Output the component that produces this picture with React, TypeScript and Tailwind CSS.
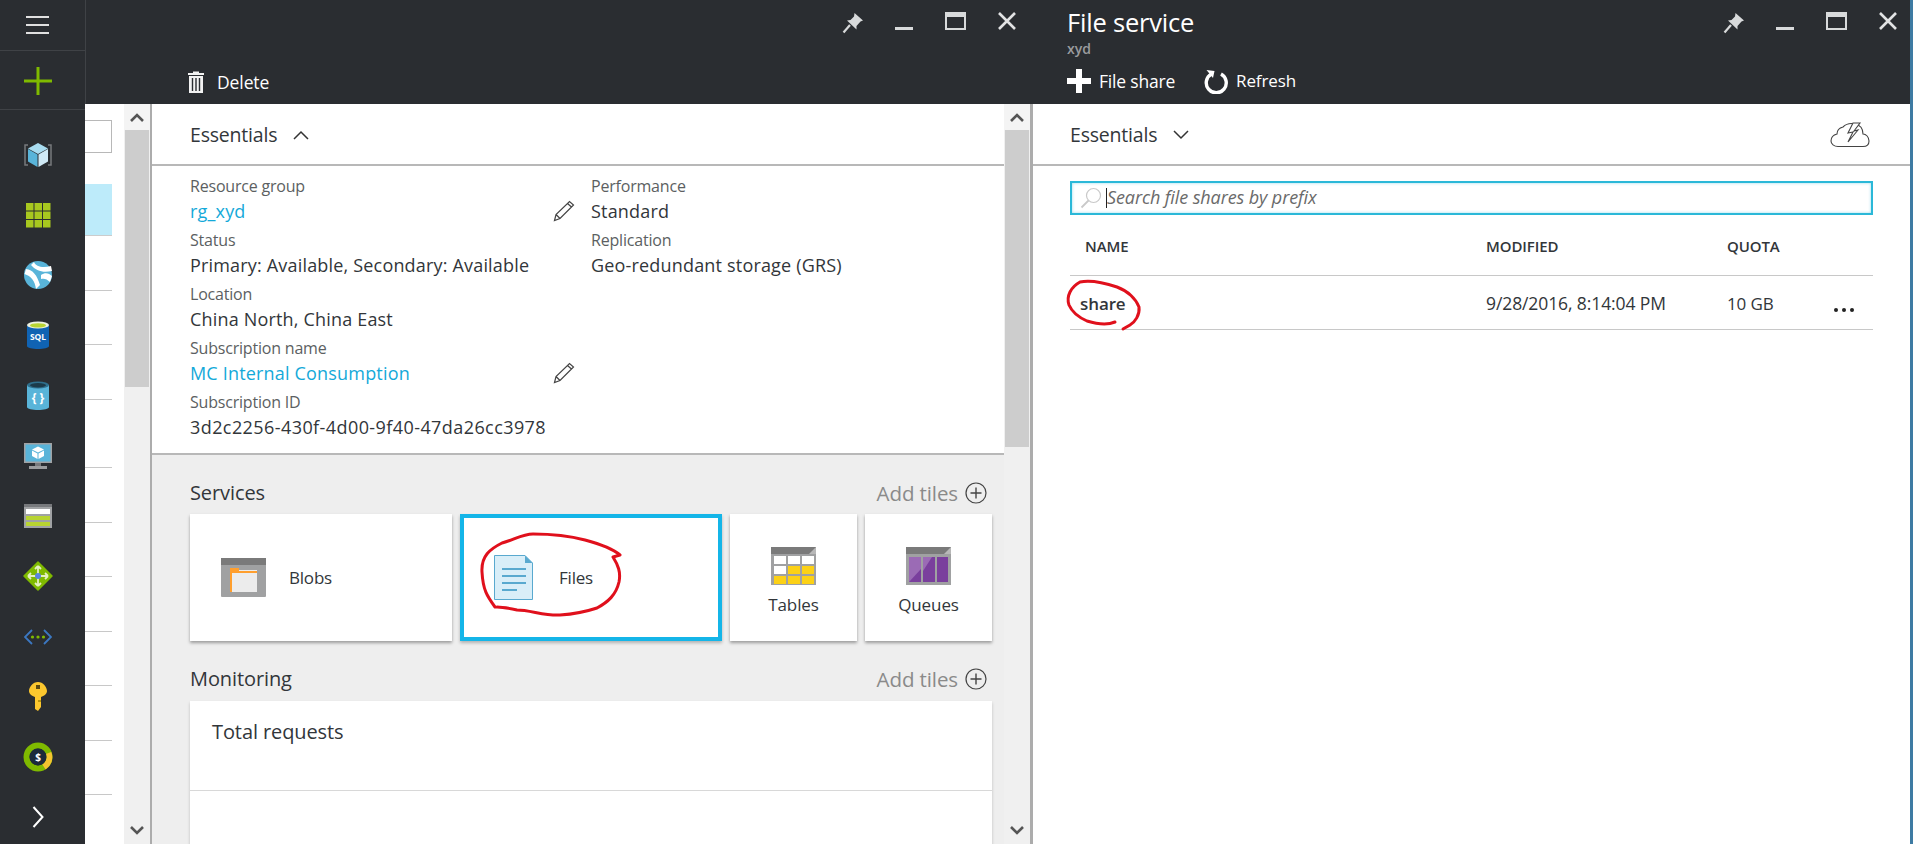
import React from "react";

const RowHeights = ["h-[55px]", "h-[54px]", "h-[55px]", "h-[68px]", "h-[55px]", "h-[54px]", "h-[55px]", "h-[54px]", "h-[55px]", "h-[54px]"];

function Pin() {
  return (
    <svg width="22" height="22" viewBox="0 0 22 22">
      <path d="M12.5 1 L21 8.5 L18.5 9.5 L14.5 14 L14.5 17.5 L5 8.5 L8.5 8 L12 4.5 Z" fill="#d8dadb" />
      <path d="M8 13 L1.5 20.5" stroke="#d8dadb" strokeWidth="2.2" />
    </svg>
  );
}

function WindowControls() {
  return (
    <div className="flex items-start">
      <div className="w-[22px] h-[22px]"><Pin /></div>
      <div className="ml-[31px] mt-[15px] w-[18px] h-[3px] bg-[#d8dadb]" />
      <div className="ml-[32px] w-[21px] h-[18px] border-2 border-t-[5px] border-[#d8dadb]" />
      <svg className="ml-[32px]" width="18" height="18" viewBox="0 0 18 18">
        <path d="M1 1 L17 17 M17 1 L1 17" stroke="#e2e3e4" strokeWidth="2.6" />
      </svg>
    </div>
  );
}

function Pencil() {
  return (
    <svg width="22" height="22" viewBox="0 0 22 22" fill="none" stroke="#444" strokeWidth="1.2">
      <path d="M1.5 20.5 L3 14.5 L16.5 1.5 L20.5 5 L7 18.5 Z M3 14.5 L7 18.5 M14.5 3.5 L18.5 7" />
    </svg>
  );
}

function PlusCircle() {
  return (
    <svg width="22" height="22" viewBox="0 0 22 22" fill="none" stroke="#444" strokeWidth="1.2">
      <circle cx="11" cy="11" r="10" />
      <path d="M11 5.5 V16.5 M5.5 11 H16.5" strokeWidth="1.4" />
    </svg>
  );
}

function Chevron({ up, className }: { up?: boolean; className?: string }) {
  return (
    <svg className={className} width="16" height="10" viewBox="0 0 16 10" fill="none" stroke="#333" strokeWidth="1.5">
      <path d={up ? "M1 9 L8 2 L15 9" : "M1 1 L8 8 L15 1"} />
    </svg>
  );
}

function ScrollArrow({ up }: { up?: boolean }) {
  return (
    <svg width="14" height="10" viewBox="0 0 14 10" fill="none" stroke="#555" strokeWidth="2.6">
      <path d={up ? "M1 9 L7 3 L13 9" : "M1 1 L7 7 L13 1"} />
    </svg>
  );
}

function ScrollBar({ thumb, w }: { thumb: string; w: string }) {
  return (
    <div className={`${w} shrink-0 bg-[#f0f0f0] flex flex-col items-center h-full`}>
      <div className="h-[26px] w-full bg-[#f4f4f4] flex items-center justify-center"><ScrollArrow up /></div>
      <div className={`${thumb} w-[24px] bg-[#cdcdcd]`} />
      <div className="flex-1" />
      <div className="h-[26px] flex items-center justify-center"><ScrollArrow /></div>
    </div>
  );
}

function Field({ label, value, link, edit, wide }: { label: string; value: string; link?: boolean; edit?: boolean; wide?: boolean }) {
  return (
    <>
      <div className="h-[27px] leading-[27px] text-[16px] text-[#5c5f62] tracking-[-0.2px]">{label}</div>
      <div className="relative h-[27px] leading-[23px] flex justify-between items-start">
        <span className={`text-[18px] ${wide ? "tracking-[0.42px]" : "tracking-[0.18px]"} ${link ? "text-[#14a9d9]" : "text-[#32363a]"}`}>{value}</span>
        {edit ? <Pencil /> : null}
      </div>
    </>
  );
}

function SectionHead({ title, className }: { title: string; className: string }) {
  return (
    <div className={`h-[28px] flex items-center justify-between pr-[5px] ${className}`}>
      <span className="text-[20px] text-[#32363a] tracking-[-0.1px]">{title}</span>
      <span className="flex items-center gap-[7px]">
        <span className="text-[20.5px] text-[#8a8a8a] tracking-[-0.1px]">Add tiles</span>
        <PlusCircle />
      </span>
    </div>
  );
}

const sideIcons: React.ReactNode[] = [
  <svg key="a" width="30" height="30" viewBox="0 0 30 30">
    <path d="M5 5 H2 V25 H5 M25 5 H28 V25 H25" fill="none" stroke="#77797c" strokeWidth="1.5" />
    <path d="M15 3 L25 8.5 L15 14 L5 8.5 Z" fill="#a8dcf0" />
    <path d="M5 9 L14.5 14.5 V27 L5 21.5 Z" fill="#59b4d9" />
    <path d="M25 9 L15.5 14.5 V27 L25 21.5 Z" fill="#cfe9f5" />
  </svg>,
  <svg key="b" width="26" height="26" viewBox="0 0 26 26" fill="#a8c81f">
    {[1, 9.5, 18].map((x) => [1, 9.5, 18].map((y) => <rect key={`${x}-${y}`} x={x} y={y} width="7.5" height="7.5" />))}
  </svg>,
  <svg key="c" width="30" height="30" viewBox="0 0 30 30">
    <circle cx="15" cy="15" r="14" fill="#59b4d9" />
    <path d="M3 9 C10 10 14 15 17 25 L13 29 C12 21 8 16 1.5 14 Z M11 2 C13 7 20 8 28 6 L29 11 C20 13 13 11 8 5 Z M18 15 C22 12 26 13 29 16 L27 22 C24 19 21 18 18 19 Z" fill="#ffffff" />
  </svg>,
  <svg key="d" width="24" height="29" viewBox="0 0 24 29">
    <path d="M1 4 V25 C1 29 23 29 23 25 V4 Z" fill="#1063b3" />
    <ellipse cx="12" cy="4" rx="11" ry="3.6" fill="#eef2e0" />
    <ellipse cx="12" cy="4.4" rx="8" ry="2.2" fill="#b8d432" />
    <text x="12" y="19" textAnchor="middle" fontSize="8.5" fontWeight="700" fill="#ffffff" fontFamily="Open Sans, sans-serif">SQL</text>
  </svg>,
  <svg key="e" width="24" height="30" viewBox="0 0 24 30">
    <path d="M1 4 V26 C1 30 23 30 23 26 V4 Z" fill="#59b4d9" />
    <ellipse cx="12" cy="4" rx="11" ry="3.6" fill="#2f6f8c" />
    <ellipse cx="12" cy="4.3" rx="8" ry="2.2" fill="#1c3b4a" />
    <text x="12" y="21" textAnchor="middle" fontSize="12" fontWeight="700" fill="#ffffff" fontFamily="Open Sans, sans-serif">{"{ }"}</text>
  </svg>,
  <svg key="f" width="28" height="27" viewBox="0 0 28 27">
    <rect x="0" y="0" width="28" height="20" fill="#a0a2a4" />
    <rect x="1.5" y="1.5" width="25" height="17" fill="#59b4d9" />
    <path d="M14 3.5 L20 6.5 L14 9.5 L8 6.5 Z M8 7.5 L13.5 10.5 V16 L8 13 Z M20 7.5 L14.5 10.5 V16 L20 13 Z" fill="#ffffff" />
    <rect x="11" y="20" width="6" height="3" fill="#77797c" />
    <rect x="5" y="23" width="18" height="3" fill="#9a9c9e" />
  </svg>,
  <svg key="g" width="28" height="24" viewBox="0 0 28 24">
    <rect width="28" height="24" fill="#a0a2a4" />
    <rect y="0" width="28" height="3" fill="#77797c" />
    <rect x="2" y="5" width="24" height="5" fill="#ffffff" />
    <rect x="2" y="12" width="24" height="4" fill="#b8d432" />
    <rect x="2" y="18" width="24" height="4" fill="#b8d432" />
  </svg>,
  <svg key="h" width="30" height="30" viewBox="0 0 30 30">
    <path d="M15 1 L29 15 L15 29 L1 15 Z" fill="#7fba00" stroke="#7fba00" strokeWidth="1.5" strokeLinejoin="round" />
    <path d="M15 5 V25 M5 15 H25 M15 5 L12 8 M15 5 L18 8 M15 25 L12 22 M15 25 L18 22 M5 15 L8 12 M5 15 L8 18 M25 15 L22 12 M25 15 L22 18" stroke="#e4f0c0" strokeWidth="1.8" fill="none" />
    <circle cx="15" cy="15" r="3" fill="#5a84e0" />
  </svg>,
  <svg key="i" width="28" height="16" viewBox="0 0 28 16" fill="none">
    <path d="M8 1 L1 8 L8 15 M20 1 L27 8 L20 15" stroke="#3b78c2" strokeWidth="1.8" />
    <circle cx="8.5" cy="8" r="1.6" fill="#7fba00" />
    <circle cx="14" cy="8" r="1.6" fill="#7fba00" />
    <circle cx="19.5" cy="8" r="1.6" fill="#7fba00" />
  </svg>,
  <svg key="j" width="18" height="30" viewBox="0 0 18 30">
    <path d="M9 0 C14 0 18 5 18 9 C18 12 15 14 12 15 V25 L9 29 L6 27 V15 C3 14 0 12 0 9 C0 5 4 0 9 0 Z" fill="#fcc72e" />
    <rect x="7" y="3" width="4" height="4" fill="#5c4a10" />
    <rect x="9" y="18" width="3" height="2" fill="#b89410" />
  </svg>,
  <svg key="k" width="30" height="30" viewBox="0 0 30 30">
    <circle cx="15" cy="15" r="11.5" fill="none" stroke="#7fba00" strokeWidth="6" />
    <path d="M25.5 11 A11.5 11.5 0 0 1 21 25" fill="none" stroke="#f4c430" strokeWidth="6" />
    <circle cx="15" cy="15" r="8.5" fill="#1c2a3a" />
    <text x="15" y="19" textAnchor="middle" fontSize="10" fontWeight="700" fill="#ffffff" fontFamily="Open Sans, sans-serif">$</text>
  </svg>,
  <svg key="l" width="12" height="22" viewBox="0 0 12 22" fill="none">
    <path d="M1.5 1 L10.5 11 L1.5 21" stroke="#ffffff" strokeWidth="2" />
  </svg>,
];

export default function App() {
  return (
    <div className="relative w-[1913px] h-[844px] overflow-hidden flex bg-white font-['Open_Sans',sans-serif]">
      {/* Left nav */}
      <aside className="w-[85px] shrink-0 h-full bg-[#2a2d31] flex flex-col">
        <div className="h-[51px] shrink-0 border-b border-[#3f4246] pr-[10px] flex items-center justify-center">
          <div className="flex flex-col gap-[6px] w-[23px]">
            <div className="h-[2px] bg-[#e0e0e0]" />
            <div className="h-[2px] bg-[#e0e0e0]" />
            <div className="h-[2px] bg-[#e0e0e0]" />
          </div>
        </div>
        <div className="h-[59px] shrink-0 border-b border-[#3f4246] pr-[10px] pt-[1px] flex items-center justify-center">
          <svg width="30" height="30" viewBox="0 0 30 30"><path d="M15 1 V29 M1 15 H29" stroke="#7fba00" strokeWidth="3" /></svg>
        </div>
        <div className="mt-[15px] flex flex-col pr-[10px]">
          {sideIcons.map((ic, i) => (
            <div key={i} className="h-[60.2px] flex items-center justify-center">{ic}</div>
          ))}
        </div>
      </aside>

      {/* Browse list pane */}
      <div className="w-[65px] shrink-0 h-full flex flex-col">
        <div className="h-[104px] shrink-0 bg-[#2a2d31] border-l border-[#3f4246]" />
        <div className="flex-1 flex min-h-0">
          <div className="w-[39px] shrink-0 pr-[12px] pt-[16px]">
            <div className="h-[33px] border border-l-0 border-[#b8b8b8]" />
            <div className="mt-[31px] h-[52px] bg-[#bdebfa] border-b border-[#ccc]" />
            {RowHeights.map((h, r) => (
              <div key={r} className={`${h} border-b border-[#c8c8c8]`} />
            ))}
          </div>
          <ScrollBar w="w-[26px]" thumb="h-[257px]" />
        </div>
      </div>

      {/* Storage blade */}
      <section className="w-[883px] shrink-0 h-full flex flex-col border-l-[2px] border-r-[3px] border-[#acacac]">
        <header className="h-[104px] shrink-0 bg-[#2a2d31] pl-[38px] pr-[11px] pt-[12px] flex justify-between -ml-[2px] -mr-[3px]">
          <div className="pt-[56px] flex items-center h-[84px] gap-[13px]">
            <svg width="16" height="22" viewBox="0 0 16 22">
              <path d="M5 2 V0.5 H11 V2 H16 V4 H0 V2 Z M1 5 H15 V22 H1 Z" fill="#f2f2f2" />
              <path d="M4.5 7 V20 M8 7 V20 M11.5 7 V20" stroke="#2a2d31" strokeWidth="1.4" />
            </svg>
            <span className="text-[17.5px] text-white tracking-[-0.1px]">Delete</span>
          </div>
          <div className="mr-[6px]"><WindowControls /></div>
        </header>
        <div className="flex-1 flex min-h-0">
          <div className="flex-1 min-w-0 flex flex-col">
            <div className="h-[62px] shrink-0 border-b-2 border-[#b8b8b8] pl-[38px] pt-[1px] flex items-center gap-[16px]">
              <span className="text-[19.5px] text-[#32363a] tracking-[-0.2px]">Essentials</span>
              <Chevron up />
            </div>
            <div className="h-[289px] shrink-0 border-b-2 border-[#b8b8b8] pl-[38px] pt-[7px] flex">
              <div className="w-[385px]">
                <Field label="Resource group" value="rg_xyd" link edit />
                <Field label="Status" value="Primary: Available, Secondary: Available" />
                <Field label="Location" value="China North, China East" />
                <Field label="Subscription name" value="MC Internal Consumption" link edit />
                <Field label="Subscription ID" value="3d2c2256-430f-4d00-9f40-47da26cc3978" wide />
              </div>
              <div className="ml-[16px]">
                <Field label="Performance" value="Standard" />
                <Field label="Replication" value="Geo-redundant storage (GRS)" />
              </div>
            </div>
            <div className="flex-1 bg-[#eeeeee] pl-[38px] pr-[12px] overflow-hidden">
              <SectionHead title="Services" className="mt-[24px] mb-[7px]" />
              <div className="flex gap-[8px] h-[127px]">
                <div className="w-[262px] bg-white shadow-[0_2px_3px_rgba(0,0,0,0.35)] flex items-center pl-[31px] gap-[23px]">
                  <svg width="45" height="39" viewBox="0 0 45 39">
                    <rect width="45" height="39" rx="1" fill="#a0a1a2" />
                    <rect width="45" height="7" fill="#7a7a7a" />
                    <rect x="9" y="12" width="27" height="22" fill="#ececec" />
                    <path d="M9 34 V10 H18 V13 H36 V15 H11 V34 Z" fill="#ff9f2e" />
                  </svg>
                  <span className="text-[17px] text-[#32363a] tracking-[-0.2px]">Blobs</span>
                </div>
                <div className="w-[262px] bg-white border-4 border-[#14b5e8] shadow-[0_2px_3px_rgba(0,0,0,0.25)] flex items-center pl-[30px] gap-[26px]">
                  <svg width="39" height="45" viewBox="0 0 39 45">
                    <path d="M0.5 0.5 H31 L38.5 8 V44.5 H0.5 Z" fill="#d9eef8" stroke="#59a9cf" />
                    <path d="M31 0.5 V8 H38.5 Z" fill="#59a9cf" />
                    <path d="M8 14 H32 M8 21 H32 M8 28 H32 M8 35 H23" stroke="#59a9cf" strokeWidth="1.8" />
                  </svg>
                  <span className="text-[17px] text-[#32363a] tracking-[-0.2px]">Files</span>
                </div>
                <div className="w-[127px] bg-white shadow-[0_2px_3px_rgba(0,0,0,0.35)] flex flex-col items-center pt-[33px]">
                  <svg width="45" height="38" viewBox="0 0 45 38">
                    <rect width="45" height="38" fill="#a0a1a2" />
                    <rect width="45" height="7" fill="#7a7a7a" />
                    <path d="M38 7 L45 0 V7 Z" fill="#b8b8b8" />
                    {[3, 17, 31].map((x) => [9, 19, 29].map((y) => (
                      <rect key={`${x}-${y}`} x={x} y={y} width="12" height="8" fill={y === 9 || (y === 19 && x === 3) ? "#ffffff" : "#fcd116"} />
                    )))}
                  </svg>
                  <span className="mt-[9px] text-[17px] leading-[22px] text-[#32363a] tracking-[-0.1px]">Tables</span>
                </div>
                <div className="w-[127px] bg-white shadow-[0_2px_3px_rgba(0,0,0,0.35)] flex flex-col items-center pt-[33px]">
                  <svg width="45" height="38" viewBox="0 0 45 38">
                    <rect width="45" height="38" fill="#a0a1a2" />
                    <rect width="45" height="7" fill="#7a7a7a" />
                    <path d="M38 7 L45 0 V7 Z" fill="#b8b8b8" />
                    <rect x="3" y="10" width="12" height="25" fill="#9b6bb5" />
                    <rect x="17" y="10" width="12" height="25" fill="#7a3f9d" />
                    <rect x="31" y="10" width="11" height="25" fill="#7a3f9d" />
                    <path d="M3 35 L15 22 V35 Z" fill="#7a3f9d" />
                    <path d="M17 10 H26 L17 24 Z" fill="#9b6bb5" />
                  </svg>
                  <span className="mt-[9px] text-[17px] leading-[22px] text-[#32363a] tracking-[-0.1px]">Queues</span>
                </div>
              </div>
              <SectionHead title="Monitoring" className="mt-[24px] mb-[8px]" />
              <div className="h-[200px] bg-white shadow-[0_2px_3px_rgba(0,0,0,0.2)]">
                <div className="h-[90px] border-b border-[#d8d8d8] pl-[22px] pt-[16px] text-[20px] leading-[30px] text-[#32363a] tracking-[-0.1px]">Total requests</div>
              </div>
            </div>
          </div>
          <ScrollBar w="w-[26px]" thumb="h-[317px]" />
        </div>
      </section>

      {/* File service blade */}
      <section className="flex-1 min-w-0 h-full flex flex-col border-r-[3px] border-[#3e7ba3]">
        <header className="h-[104px] shrink-0 bg-[#2a2d31] pl-[34px] pr-[13px] pt-[12px] flex justify-between">
          <div className="-mt-[5px]">
            <div className="text-[25.5px] leading-[30px] text-white tracking-[-0.2px]">File service</div>
            <div className="mt-[3px] text-[14px] leading-[18px] font-semibold text-[#9a9c9e]">xyd</div>
            <div className="mt-[8px] flex items-center h-[30px]">
              <svg width="24" height="24" viewBox="0 0 24 24"><path d="M12 0 V24 M0 12 H24" stroke="#ffffff" strokeWidth="6" /></svg>
              <span className="ml-[8px] text-[17.5px] text-white tracking-[-0.2px]">File share</span>
              <svg className="ml-[29px]" width="24" height="25" viewBox="0 0 24 25" fill="none">
                <path d="M7.5 5 A10 10 0 1 0 17 5" stroke="#ffffff" strokeWidth="3.4" />
                <path d="M2.5 1 L10.5 2 L9 9 Z" fill="#ffffff" />
              </svg>
              <span className="ml-[8px] text-[17px] text-white tracking-[-0.1px]">Refresh</span>
            </div>
          </div>
          <WindowControls />
        </header>
        <div className="h-[62px] shrink-0 border-b-2 border-[#b8b8b8] pl-[37px] pr-[40px] pt-[1px] flex items-center justify-between">
          <div className="flex items-center gap-[16px]">
            <span className="text-[19.5px] text-[#32363a] tracking-[-0.2px]">Essentials</span>
            <Chevron />
          </div>
          <svg width="40" height="26" viewBox="0 0 40 26" fill="none" stroke="#444" strokeWidth="1.1">
            <path d="M13 5 C9 6 7 9 7 12 C3 13 1 16 1 19 C1 22 4 24.5 8 24.5 H33 C37 24.5 39 22 39 19 C39 15 36 12 33 12 C33 7 30 3 25 2 C21 1 16 2 13 5 Z" />
            <path d="M23 1 L18 11 L23 10 L18 20 L28 8 L24 9 L30 1 Z" fill="#ffffff" />
          </svg>
        </div>
        <div className="px-[37px] pt-[15px]">
          <div className="h-[34px] border-2 border-[#2bb8d8] shadow-[inset_0_0_3px_rgba(43,184,216,0.5)] flex items-center pl-[8px]">
            <svg width="22" height="22" viewBox="0 0 22 22" fill="none" stroke="#c9c9c9" strokeWidth="1.2">
              <circle cx="13.5" cy="8.5" r="7" />
              <path d="M8.5 13.5 L1.5 20.5" strokeWidth="1.8" />
            </svg>
            <div className="ml-[4px] w-[1px] h-[20px] bg-[#222]" />
            <span className="text-[18px] leading-[24px] -mt-[2px] italic text-[#6a6a6a] tracking-[-0.1px]">Search file shares by prefix</span>
          </div>
          <div className="h-[61px] border-b border-[#c8c8c8] pt-[2px] flex items-center text-[15px] font-semibold text-[#32363a] tracking-[-0.1px]">
            <span className="w-[401px] pl-[15px] shrink-0 box-content">NAME</span>
            <span className="w-[241px] shrink-0">MODIFIED</span>
            <span>QUOTA</span>
          </div>
          <div className="h-[54px] border-b border-[#c8c8c8] pt-[2px] flex items-center text-[17px] text-[#32363a] tracking-[-0.1px]">
            <span className="w-[406px] pl-[10px] shrink-0 box-content font-semibold">share</span>
            <span className="w-[241px] shrink-0 text-[17.5px]">9/28/2016, 8:14:04 PM</span>
            <span className="w-[107px] shrink-0">10 GB</span>
            <span className="flex gap-[4px] mt-[12px]">
              <span className="w-[4px] h-[4px] rounded-full bg-[#222]" />
              <span className="w-[4px] h-[4px] rounded-full bg-[#222]" />
              <span className="w-[4px] h-[4px] rounded-full bg-[#222]" />
            </span>
          </div>
        </div>
      </section>

      {/* Red pen annotations over the screenshot */}
      <svg className="absolute left-0 top-0 pointer-events-none" width="1913" height="844" fill="none" stroke="#e0101c" strokeWidth="3" strokeLinecap="round" strokeLinejoin="round">
        <path d="M495 607 C487 596 483 590 482 572 C481 556 490 549 502 543 C514 540 522 534 533 534 C550 534 570 536 585 540 C600 544 612 548 620 555 L613 557 C618 565 621 572 619 582 C616 595 608 602 597 608 C585 612 575 614 560 615 C545 616 530 610 517 610 C508 608 502 607 497 607" />
        <path d="M1115 322 C1108 325 1100 325 1087 321 C1078 317 1072 312 1069 305 C1066 296 1071 287 1080 282 C1090 280 1105 283 1117 287 C1128 291 1136 299 1139 307 C1140 315 1135 322 1130 325 L1123 329" />
      </svg>
    </div>
  );
}
